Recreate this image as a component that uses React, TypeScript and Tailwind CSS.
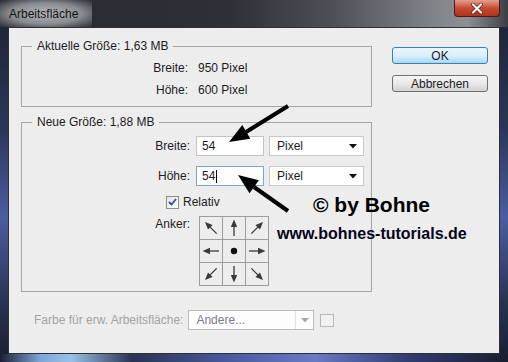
import React from 'react'

// Winkel der Anker-Pfeile, Reihe für Reihe (null = Mittelpunkt)
const ANCHOR_ANGLES: (number | null)[] = [-45, 0, 45, -90, null, 90, -135, 180, 135]

const AnchorArrow = ({ angle }: { angle: number | null }) => {
  if (angle === null) {
    return (
      <svg width="22" height="22" viewBox="0 0 22 22">
        <circle cx="11" cy="11" r="3.2" fill="#111" />
      </svg>
    )
  }
  return (
    <svg width="22" height="22" viewBox="0 0 22 22">
      <g transform={`rotate(${angle} 11 11)`}>
        <line x1="11" y1="19" x2="11" y2="8" stroke="#3a3a3a" strokeWidth="1.3" />
        <polygon points="11,2.5 7.8,10 14.2,10" fill="#3a3a3a" />
      </g>
    </svg>
  )
}

const DropArrow = ({ color = '#111' }: { color?: string }) => (
  <svg width="8" height="5" viewBox="0 0 8 5">
    <polygon points="0,0 8,0 4,4.5" fill={color} />
  </svg>
)

const PixelSelect = () => (
  <div className="ml-[5px] flex h-[20px] w-[95px] items-center justify-between border border-[#c9c9c9] bg-white pl-[7px] pr-[6px]">
    <span>Pixel</span>
    <DropArrow />
  </div>
)

export default function App() {
  return (
    <div className="relative h-[362px] w-[508px] overflow-hidden bg-[linear-gradient(180deg,#1c2230_0%,#2b3558_35%,#4c5da0_60%,#27304e_85%,#1a1f30_100%)] font-['Liberation_Sans',Arial,sans-serif] text-[12px] leading-[14px] text-[#1c1c24]">
      {/* Titelleiste */}
      <div className="relative flex h-[27px] items-center bg-[linear-gradient(90deg,#262a31_0%,#2c3037_45%,#4b5057_65%,#7f8388_85%,#8d9094_92%,#3a3e44_100%)]">
        <span className="flex h-[27px] items-center bg-[radial-gradient(ellipse_at_center,rgba(190,192,195,0.95)_0%,rgba(160,163,167,0.8)_55%,rgba(60,64,70,0)_100%)] pl-[9px] pr-[14px] text-[#111]">Arbeitsfläche</span>
        <div className="absolute right-[8px] top-0 flex h-[17px] w-[46px] items-center justify-center rounded-b-[4px] border border-t-0 border-[#4a1a14] bg-linear-to-b from-[#e0a08f] via-[#c74a32] to-[#b0331c]">
          <svg width="14" height="11" viewBox="0 0 14 11">
            <path d="M3 1.5 L11 9.5 M11 1.5 L3 9.5" stroke="#5a1a10" strokeWidth="3.6" strokeLinecap="round" />
            <path d="M3 1.5 L11 9.5 M11 1.5 L3 9.5" stroke="#fff" strokeWidth="2.2" strokeLinecap="round" />
          </svg>
        </div>
      </div>

      {/* Dialogfläche */}
      <div className="ml-[8px] flex h-[327px] w-[492px] border border-[#2c3038] bg-[#ededed] pl-[12px] pt-[11px]">
        <div className="flex w-[351px] flex-col">
          <fieldset className="border border-[#a5a5a5] px-0 pb-[5px] pt-[4px]">
            <legend className="ml-[10px] px-[5px]">Aktuelle Größe: 1,63 MB</legend>
            <div className="grid grid-cols-[166px_auto] gap-x-[10px] leading-[22px]">
              <span className="text-right">Breite:</span>
              <span>950 Pixel</span>
              <span className="text-right">Höhe:</span>
              <span>600 Pixel</span>
            </div>
          </fieldset>

          <fieldset className="mt-[8px] border border-[#a5a5a5] pb-[5px] pt-[7px]">
            <legend className="ml-[10px] px-[5px]">Neue Größe: 1,88 MB</legend>
            <div className="flex items-center">
              <span className="w-[168px] text-right">Breite:</span>
              <div className="ml-[6px] flex h-[20px] w-[68px] items-center border border-[#c4c4c4] bg-white pl-[5px]">54</div>
              <PixelSelect />
            </div>
            <div className="mt-[10px] flex items-center">
              <span className="w-[168px] text-right">Höhe:</span>
              <div className="ml-[6px] flex h-[20px] w-[68px] items-center border border-[#7aa7d6] bg-white pl-[5px]">
                54<span className="ml-px inline-block h-[13px] w-px bg-black" />
              </div>
              <PixelSelect />
            </div>
            <div className="mt-[9px] flex items-center pl-[144px]">
              <div className="flex h-[13px] w-[13px] items-center justify-center border border-[#8e8f8f] bg-linear-to-br from-[#e4e4e4] to-[#fbfbfb]">
                <svg width="9" height="8" viewBox="0 0 9 8">
                  <path d="M1 4 L3.5 6.5 L8 1" fill="none" stroke="#2b4f8f" strokeWidth="1.8" />
                </svg>
              </div>
              <span className="ml-[4px]">Relativ</span>
            </div>
            <div className="mt-[7px] flex items-start">
              <span className="mt-[1px] w-[168px] text-right">Anker:</span>
              <div className="ml-[9px] grid grid-cols-[repeat(3,22px)] gap-px border border-[#9d9d9d] bg-[#9d9d9d]">
                {ANCHOR_ANGLES.map((a, i) => (
                  <div key={i} className="bg-[#ededed]">
                    <AnchorArrow angle={a} />
                  </div>
                ))}
              </div>
            </div>
          </fieldset>

          <div className="mt-[18px] flex items-center pl-[13px]">
            <span className="text-[#a3a3a3]">Farbe für erw. Arbeitsfläche:</span>
            <div className="ml-[5px] flex h-[20px] w-[126px] items-stretch border border-[#bcbcbc] bg-[#fdfdfd]">
              <span className="flex flex-1 items-center pl-[7px] text-[#7c7c8c]">Andere...</span>
              <span className="flex w-[18px] items-center justify-center border-l border-[#e2e2e2]">
                <DropArrow color="#a8a8a8" />
              </span>
            </div>
            <div className="ml-[6px] h-[13px] w-[14px] border border-[#b8b8b8] bg-[#f1f1f1]" />
          </div>
        </div>

        <div className="ml-[20px] mt-[8px] flex w-[96px] flex-col gap-[11px]">
          <button className="flex h-[17px] items-center justify-center rounded-[3px] border border-[#3c7fb1] bg-linear-to-b from-[#eaf6fd] via-[#d9f0fc] to-[#a7d9f5] text-[#1c1c24]">OK</button>
          <button className="flex h-[17px] items-center justify-center rounded-[3px] border border-[#707070] bg-linear-to-b from-[#f6f6f6] via-[#e9e9e9] to-[#d2d2d2] text-[#1c1c24]">Abbrechen</button>
        </div>
      </div>

      {/* Unterer Rahmen */}
      <div className="h-[8px] bg-[linear-gradient(90deg,#1a2030_0%,#7fa6da_8%,#9cc0e6_14%,#2a3350_26%,#4a5aa0_45%,#6a7ac8_62%,#323d70_80%,#1a1f30_100%)]" />

      {/* Anmerkungen: Pfeile und Wasserzeichen */}
      <svg className="pointer-events-none absolute left-0 top-0" width="508" height="362">
        <line x1="288" y1="106" x2="246" y2="132" stroke="#000" strokeWidth="4" />
        <polygon points="229,142 250.3,138.8 242.3,125" fill="#000" />
        <line x1="288" y1="211" x2="254" y2="187" stroke="#000" strokeWidth="4" />
        <polygon points="238,175 258.9,180.2 249.5,193.2" fill="#000" />
      </svg>
      <div className="absolute left-[313px] top-[193px] text-[21px] font-bold leading-[24px] text-black">© by Bohne</div>
      <div className="absolute left-[277px] top-[225px] text-[16px] font-bold leading-[18px] text-[#05051a]">www.bohnes-tutorials.de</div>
    </div>
  )
}
